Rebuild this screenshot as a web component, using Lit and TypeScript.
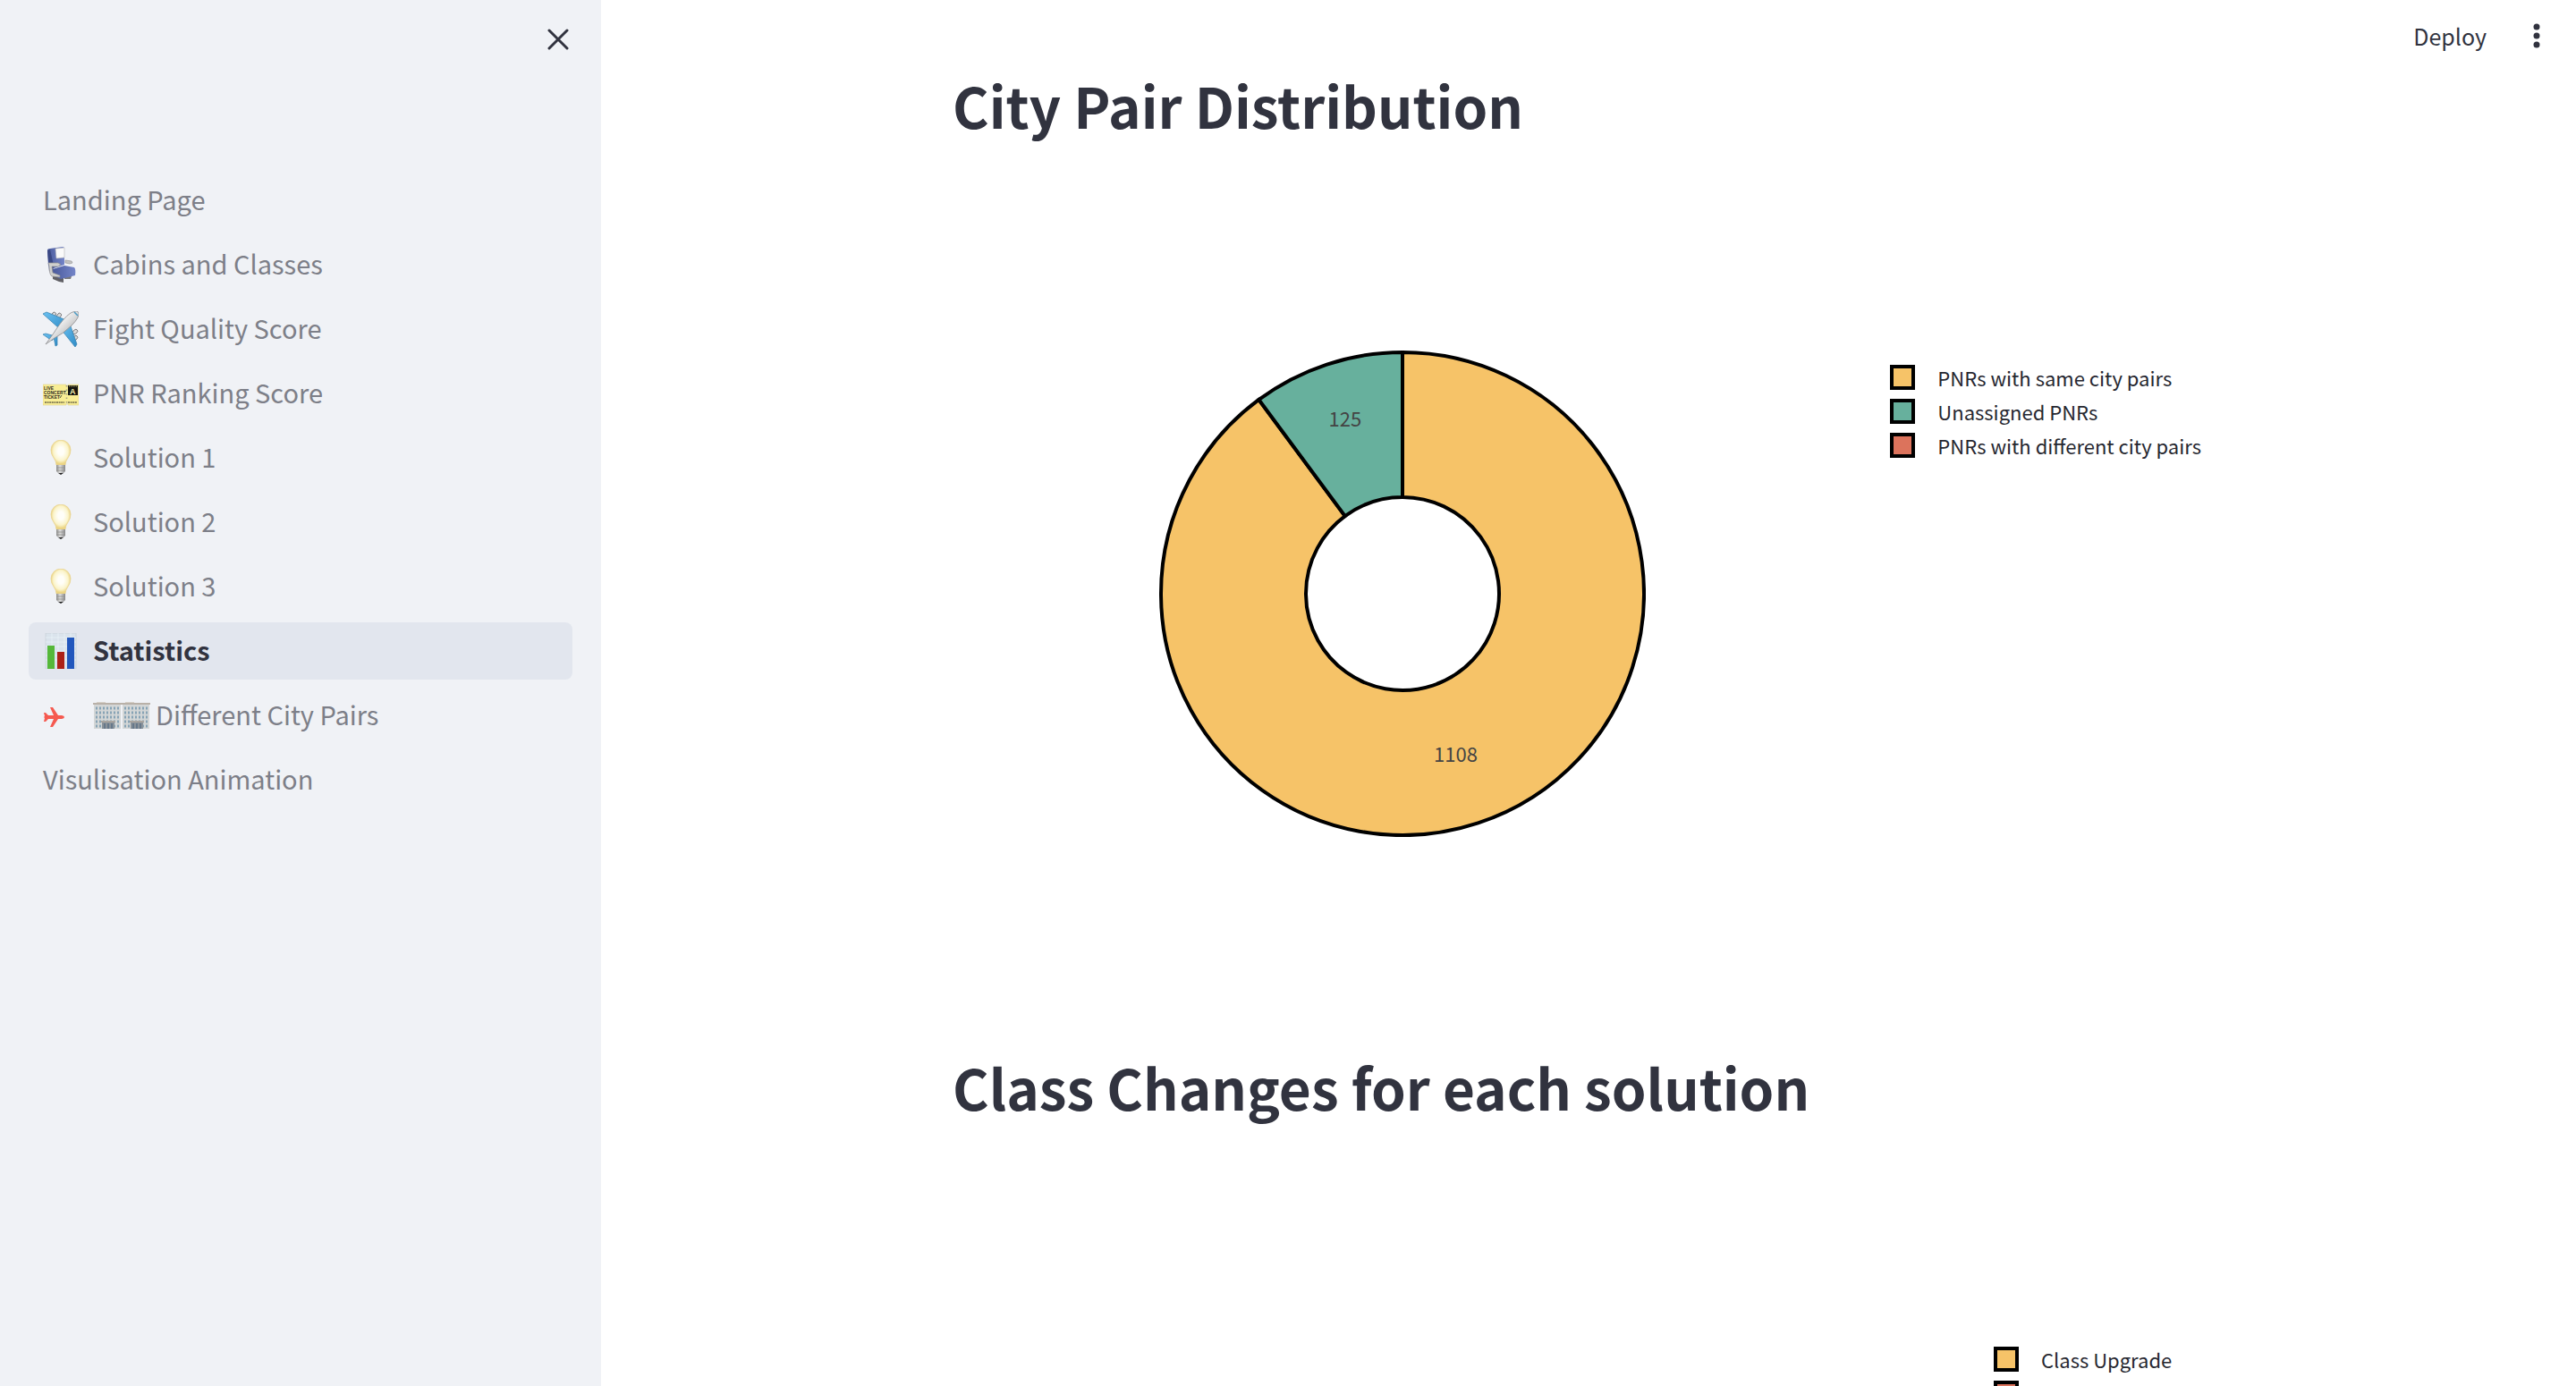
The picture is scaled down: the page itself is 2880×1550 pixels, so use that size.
import { LitElement, html, svg, css } from "lit";
import { customElement, property } from "lit/decorators.js";

const seat = svg`
  <defs><linearGradient id="s" x1="0" x2="1"><stop offset="0" stop-color="#4a5a9c"/><stop offset="1" stop-color="#7485c8"/></linearGradient></defs>
  <path d="M11 33h12v7l-5-1-7-3z" fill="#606065"/><path d="M24 33h8l-1 3h-7z" fill="#77777c"/>
  <path d="M5 4q0-2 3-2l14-2q2 0 2 2v18l-12 4-6-3z" fill="url(#s)"/>
  <path d="M5 4l3-1 4 18-1 8-4-2z" fill="#3a4884"/>
  <path d="M11 25l13-4 11 2q2 2 1 9l-16 4-9-4z" fill="url(#s)"/>
  <path d="M14 2l10-1v11l-9 1z" fill="#fafafa" stroke="#b5b5b8" stroke-width=".6"/>
  <path d="M6 18h11l3 2-3 2H10l1 7 8 3v2l-9-1q-3-2-3-11z" fill="#d0d0ce" stroke="#8f8f91" stroke-width=".7"/>
  <path d="M25 15l7 1 1 2-3 1-5-1z" fill="#c2c2c2" stroke="#8f8f91" stroke-width=".6"/>`;

const plane = svg`
  <defs><linearGradient id="w" x1="0" x2="1" y1="0" y2="1"><stop offset="0" stop-color="#6cc2f2"/><stop offset="1" stop-color="#2f8bc6"/></linearGradient>
  <linearGradient id="f" x1="0" x2="1" y1="0" y2="1"><stop offset=".3" stop-color="#fff"/><stop offset="1" stop-color="#8b8b8d"/></linearGradient></defs>
  <g fill="#d8d8d8" stroke="#77777a" stroke-width=".9"><rect x="10" y="1" width="4" height="6" rx="2" transform="rotate(35 12 4)"/><rect x="16" y="2" width="4" height="6" rx="2" transform="rotate(35 18 5)"/><rect x="34" y="20" width="4" height="6" rx="2" transform="rotate(50 36 23)"/><rect x="34" y="27" width="4" height="6" rx="2" transform="rotate(50 36 30)"/></g>
  <path d="M0 3l4-2 22 9-7 10z" fill="url(#w)" stroke="#3480ae" stroke-width=".7"/>
  <path d="M30 14l8 23-2 3-16-20z" fill="url(#w)" stroke="#3480ae" stroke-width=".7"/>
  <path d="M0 26l3-1 11 3-4 5zM12 29l4-1v10l-2 1z" fill="url(#w)" stroke="#3480ae" stroke-width=".7"/>
  <path d="M3 37l8-11Q23 7 31 2q8-4 9 0 1 5-8 14-9 9-19 14z" fill="url(#f)" stroke="#8b8b8e" stroke-width=".8"/>
  <path d="M35 1l4 4" stroke="#4b9bc5" stroke-width="1.6"/>`;

const ticket = svg`
  <path d="M0 10h26q0 2 1 2t1-2h12v23H28q0-2-1-2t-1 2H0z" fill="#f9ee94" stroke="#ddd296" stroke-width=".6"/>
  <g font-family="Liberation Sans, sans-serif" font-weight="700" font-size="5" fill="#2b2a1c"><text x="1" y="16">LIVE</text><text x="1" y="21">CONCERT</text><text x="1" y="26">TICKET</text></g>
  <path d="M2 30h22M28 30h10" stroke="#6c6748" stroke-width="1.600" stroke-dasharray="2 .6"/><path d="M19 25l2-3" stroke="#55523a"/>
  <path d="M28 11h11v11H28z" fill="#151510"/><path d="M29 12h9" stroke="#b5ae70" stroke-dasharray="1 .6"/>
  <text x="30" y="21" font-family="Liberation Sans, sans-serif" font-weight="700" font-size="9" fill="#f7f0b0">A</text>
  <path d="M26.500 11v22" stroke="#a5a184" stroke-dasharray="1.500 3" stroke-width="1.600"/>`;

const bulb = svg`
  <defs><radialGradient id="b" cy=".45"><stop offset=".3" stop-color="#fffef8"/><stop offset=".75" stop-color="#fbf4cb"/><stop offset="1" stop-color="#ecd584"/></radialGradient>
  <linearGradient id="m"><stop offset="0" stop-color="#8c8c8b"/><stop offset=".4" stop-color="#e0e0df"/><stop offset="1" stop-color="#88888a"/></linearGradient></defs>
  <path d="M15 28q0-4-3-8-3-4-3-9Q10 1 20 0q10 1 11 11 0 5-3 9-3 4-3 8z" fill="url(#b)" stroke="#e6d08a" stroke-width=".7"/>
  <path d="M15 28h10v7l-2 2h-6l-2-2z" fill="url(#m)"/><path d="M15 31h10M15 34h10" stroke="#8d8d8b" stroke-width=".8"/><path d="M17 37h6l-3 2z" fill="#222"/>`;

const bars = svg`
  <path d="M3 0h34v40H3z" fill="#dae3ec" stroke="#c9d0d8" stroke-width=".8"/><path d="M3 5h34M3 10h34M3 15h34M3 20h34M3 25h34M3 30h34M10 0v40M17 0v40M24 0v40M31 0v40" stroke="#e9f1f8" stroke-width=".8"/>
  <path d="M5 14h8v26H5z" fill="#55b83a"/><path d="M16 21h8v19h-8z" fill="#ac2118"/><path d="M27 5h8v35h-8z" fill="#2257bd"/>`;

const redPlane = svg`<path d="M1 17h2l3 3h6L8 11h3l6 9h4q3 .3 3 2t-3 2h-4l-6 9H8l4-9H6l-3 3H1l1-4-1-1 1-1z" fill="#f55a50"/>`;

const office = svg`
  <path d="M1 4h30v27H1z" fill="#d3d6d6"/><path d="M4 1h10v3H4z" fill="#d8d3cb"/><path d="M0 2h32v2H0z" fill="#b9b1a8"/>
  <g stroke="#87a3b5" stroke-width="3" stroke-dasharray="2 2"><path d="M3 8h27M3 13h27M3 18h27M3 23h27M3 28h27"/></g>
  <path d="M10 23h14v8H10z" fill="#8a9299"/><path d="M9 22h16v2H9z" fill="#a8a49f"/><path d="M13 25v6M17 25v6M21 25v6" stroke="#66788a" stroke-width="2"/>`;

interface Page { label: string; icon?: unknown; offices?: boolean; active?: boolean; }
const pages: Page[] = [
  { label: "Landing Page" },
  { label: "Cabins and Classes", icon: seat },
  { label: "Fight Quality Score", icon: plane },
  { label: "PNR Ranking Score", icon: ticket },
  { label: "Solution 1", icon: bulb },
  { label: "Solution 2", icon: bulb },
  { label: "Solution 3", icon: bulb },
  { label: "Statistics", icon: bars, active: true },
  { label: "Different City Pairs", icon: redPlane, offices: true },
  { label: "Visulisation Animation" },
];

interface Slice { name: string; value: number; color: string; labelRadius: number; }
const cityPairs: Slice[] = [
  { name: "PNRs with same city pairs", value: 1108, color: "#f6c368", labelRadius: 190 },
  { name: "Unassigned PNRs", value: 125, color: "#67b09d", labelRadius: 205 },
  { name: "PNRs with different city pairs", value: 0, color: "#dc735c", labelRadius: 190 },
];
const classChanges: Slice[] = [
  { name: "Class Upgrade", value: 0, color: "#f6c368", labelRadius: 190 },
  { name: "", value: 0, color: "#dc735c", labelRadius: 190 },
];

@customElement("donut-chart")
export class DonutChart extends LitElement {
  @property({ attribute: false }) slices: Slice[] = [];

  static styles = css`
    :host { display: block; }
    .chart { display: grid; grid-template-columns: 5fr 2fr; align-items: start; }
    .plot { display: flex; justify-content: center; padding: 178px 0; }
    .plot svg { width: 544px; height: 544px; }
    .value { font-size: 22px; fill: #444; text-anchor: middle; }
    .legend { list-style: none; margin: 0; padding: 194px 12px 0 0; min-width: 232px; display: flex; flex-direction: column; gap: 10px; justify-self: end; }
    .entry { display: flex; align-items: center; gap: 25px; height: 28px; font-size: 22px; line-height: 28px; color: #262730; white-space: nowrap; }
    .swatch { width: 20px; height: 20px; border: 4px solid #000; }
  `;

  private point(angle: number, radius: number) {
    return `${272 + radius * Math.sin(angle)} ${272 - radius * Math.cos(angle)}`;
  }

  render() {
    const total = this.slices.reduce((sum, s) => sum + s.value, 0);
    let start = 0;
    const arcs = this.slices.filter((s) => s.value > 0).map((s) => {
      const end = start + (s.value / total) * 2 * Math.PI;
      const mid = (start + end) / 2;
      const large = end - start > Math.PI ? 1 : 0;
      const d = `M${this.point(start, 270)}A270 270 0 ${large} 1 ${this.point(end, 270)}L${this.point(end, 108)}A108 108 0 ${large} 0 ${this.point(start, 108)}Z`;
      start = end;
      return svg`<path d=${d} fill=${s.color} stroke="#000" stroke-width="4"/>
        <text class="value" x=${272 + s.labelRadius * Math.sin(mid)} y=${280 - s.labelRadius * Math.cos(mid)}>${s.value}</text>`;
    });
    return html`<div class="chart">
      <div class="plot">${total ? html`<svg viewBox="0 0 544 544" role="img" aria-label="Donut chart">${arcs}</svg>` : ""}</div>
      <ul class="legend">${this.slices.map((s) => html`<li class="entry"><span class="swatch" style="background:${s.color}"></span>${s.name}</li>`)}</ul>
    </div>`;
  }
}

@customElement("app-root")
export class AppRoot extends LitElement {
  static styles = css`
    :host { display: block; font-family: "Noto Sans CJK SC", "Noto Sans", sans-serif; color: #31333f; }
    .app { display: flex; height: 100vh; overflow: hidden; background: #fff; }
    .sidebar { flex: none; width: 672px; background: #f0f2f6; box-sizing: border-box; padding: 20px 32px; }
    .top { display: flex; justify-content: flex-end; height: 172px; align-items: flex-start; }
    button { border: 0; background: none; padding: 0; font: inherit; color: inherit; display: flex; }
    .close { width: 32px; height: 48px; align-items: center; justify-content: center; }
    nav { display: flex; flex-direction: column; gap: 8px; }
    .page { display: flex; align-items: center; gap: 16px; height: 64px; padding: 0 16px; border-radius: 8px; font-size: 29px; color: #7d7f88; text-decoration: none; }
    .active { background: #e2e6ee; color: #31333f; font-weight: 700; }
    .icon { width: 40px; height: 40px; }
    .label { display: flex; align-items: center; gap: 6px; }
    .text { line-height: 44px; padding-bottom: 4px; }
    .offices { display: flex; }
    .office { width: 32px; height: 32px; }
    main { flex: 1; }
    .toolbar { display: flex; justify-content: flex-end; align-items: center; gap: 40px; height: 80px; padding-right: 28px; font-size: 25px; line-height: 36px; }
    .content { width: 1408px; max-width: 100%; margin: 0 auto; padding-right: 14px; }
    h2 { margin: 0; font-size: 62px; font-weight: 700; line-height: 74px; }
    section { min-height: 1098px; }
    donut-chart { margin-top: 60px; }
  `;

  render() {
    return html`<div class="app">
      <aside class="sidebar">
        <div class="top"><button class="close" aria-label="Close sidebar"><svg width="24" height="24" viewBox="0 0 24 24"><path d="M2 2l20 20M22 2L2 22" stroke="#31333f" stroke-width="3" stroke-linecap="round"/></svg></button></div>
        <nav>${pages.map((p) => html`<a class="page ${p.active ? "active" : ""}" href="#">
          ${p.icon ? html`<svg class="icon" viewBox="0 0 40 40" aria-hidden="true">${p.icon}</svg>` : ""}
          <span class="label">${p.offices ? html`<span class="offices"><svg class="office" viewBox="0 0 32 32">${office}</svg><svg class="office" viewBox="0 0 32 32">${office}</svg></span>` : ""}<span class="text">${p.label}</span></span></a>`)}</nav>
      </aside>
      <main>
        <div class="toolbar"><button>Deploy</button><button aria-label="Menu"><svg width="32" height="32" viewBox="0 0 32 32" fill="#31333f"><circle cx="16" cy="6" r="3.500"/><circle cx="16" cy="16" r="3.500"/><circle cx="16" cy="26" r="3.500"/></svg></button></div>
        <div class="content">
          <section><h2>City Pair Distribution</h2><donut-chart .slices=${cityPairs}></donut-chart></section>
          <section><h2>Class Changes for each solution</h2><donut-chart .slices=${classChanges}></donut-chart></section>
        </div>
      </main>
    </div>`;
  }
}
